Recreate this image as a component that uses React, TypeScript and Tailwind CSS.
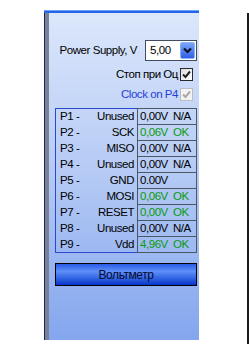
import React from "react";

const rows = [
  { p: "P1 -", n: "Unused", v: "0,00V", s: "N/A", ok: false },
  { p: "P2 -", n: "SCK", v: "0,06V", s: "OK", ok: true },
  { p: "P3 -", n: "MISO", v: "0,00V", s: "N/A", ok: false },
  { p: "P4 -", n: "Unused", v: "0,00V", s: "N/A", ok: false },
  { p: "P5 -", n: "GND", v: "0.00V", s: "", ok: false },
  { p: "P6 -", n: "MOSI", v: "0,06V", s: "OK", ok: true },
  { p: "P7 -", n: "RESET", v: "0,00V", s: "OK", ok: true },
  { p: "P8 -", n: "Unused", v: "0,00V", s: "N/A", ok: false },
  { p: "P9 -", n: "Vdd", v: "4,96V", s: "OK", ok: true },
];

function Check({ disabled }: { disabled?: boolean }) {
  return (
    <div
      className={
        disabled
          ? "w-[13px] h-[13px] border border-[#b9bdc6] bg-[#f3f3f3] flex items-center justify-center"
          : "w-[13px] h-[13px] border border-[#2b2b2b] bg-gradient-to-br from-[#dcdcdc] to-[#ffffff] flex items-center justify-center"
      }
    >
      <svg width="11" height="11" viewBox="0 0 11 11">
        <path
          d="M2 5.5 L4.5 8 L9 2.5"
          fill="none"
          stroke={disabled ? "#a9a9a9" : "#222222"}
          strokeWidth="2"
        />
      </svg>
    </div>
  );
}

export default function App() {
  return (
    <div
      className="w-[249px] h-[344px] bg-white flex text-[11.5px] tracking-[-0.45px] text-black leading-none"
      style={{ fontFamily: '"Liberation Sans", Arial, sans-serif' }}
    >
      <div className="ml-[44px] mt-[10px] w-[155px] h-[330px] flex flex-col">
        <div className="h-[1px] bg-[#6aa2fa]" />
        <div className="h-[2px] bg-[#2466e6]" />
        <div className="flex flex-1">
          <div className="w-[1px] bg-[#17256a]" />
          <div className="w-[4px] bg-[#7c8292]" />
          <div className="flex-1 bg-gradient-to-b from-[#dce7fb] via-[#b4c9f4] to-[#84a6ee] pl-[6px] pr-[2px] flex flex-col">
            <div className="mt-[27px] h-[21px] flex items-center justify-end gap-[8px]">
              <span>Power Supply, V</span>
              <div className="w-[52px] h-[21px] border border-[#3f4d5e] bg-white flex items-center justify-between pl-[4px] pr-[1px]">
                <span>5,00</span>
                <div className="w-[15px] h-[17px] rounded-[2px] bg-gradient-to-b from-[#7aa4fb] to-[#2f5fe6] border border-[#8fb0f4] flex items-center justify-center">
                  <svg width="9" height="7" viewBox="0 0 9 7">
                    <path d="M1 1.5 L4.5 5 L8 1.5" fill="none" stroke="#0b1020" strokeWidth="2.2" />
                  </svg>
                </div>
              </div>
            </div>
            <div className="mt-[7px] h-[13px] flex items-center justify-end gap-[2px] pr-[4px]">
              <span>Стоп при Оц</span>
              <Check />
            </div>
            <div className="mt-[7px] h-[13px] flex items-center justify-end gap-[2px] pr-[4px]">
              <span className="text-[#1f3fd6]">Clock on P4</span>
              <Check disabled />
            </div>
            <div className="mt-[7px] flex">
              <div className="w-[82px] h-[145px] border-l border-t border-b border-[#2a48d0] flex flex-col">
                {rows.map((r, i) => (
                  <div
                    key={r.p}
                    className={
                      i === 8
                        ? "h-[15px] flex items-center pl-[4px] pr-[3px]"
                        : "h-[16px] flex items-center pl-[4px] pr-[3px]"
                    }
                  >
                    <span>{r.p}</span>
                    <span className="ml-auto">{r.n}</span>
                  </div>
                ))}
              </div>
              <div className="w-[60px] h-[145px] border-l border-r border-t border-[#4b5866] flex flex-col">
                {rows.map((r) => (
                  <div
                    key={r.p}
                    className={
                      r.ok
                        ? "h-[16px] border-b border-[#4b5866] flex items-center pl-[2px] text-[#0a9a0a]"
                        : "h-[16px] border-b border-[#4b5866] flex items-center pl-[2px]"
                    }
                  >
                    <span className="w-[33px]">{r.v}</span>
                    <span>{r.s}</span>
                  </div>
                ))}
              </div>
            </div>
            <div className="mt-[10px] h-[23px] border border-black bg-gradient-to-b from-[#2a5ae6] via-[#5f8ff8] via-35% to-[#0632cc] flex items-center justify-center text-[#050a30] text-[12px]">
              Вольтметр
            </div>
          </div>
        </div>
      </div>
      <div className="ml-auto mt-[13px] w-[2px] h-[331px] bg-[#1a1a1a]" />
    </div>
  );
}
